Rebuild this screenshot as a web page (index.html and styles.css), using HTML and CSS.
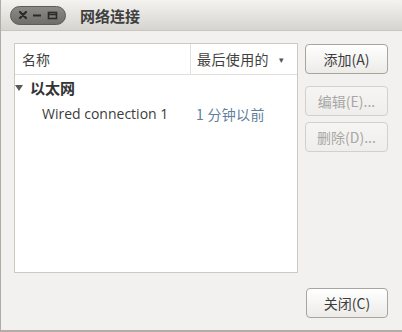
FILE: index.html
```html
<!DOCTYPE html>
<html>
<head>
<meta charset="utf-8">
<link rel="stylesheet" href="styles.css">
</head>
<body>
<div class="window">
  <div class="titlebar">
    <div class="controls">
      <svg width="56" height="19" viewBox="0 0 56 19">
        <defs>
          <linearGradient id="pill" x1="0" y1="0" x2="0" y2="1">
            <stop offset="0" stop-color="#8d8b86"/>
            <stop offset="1" stop-color="#6f6d68"/>
          </linearGradient>
        </defs>
        <rect x="0.5" y="0.5" width="55" height="18" rx="9" fill="url(#pill)" stroke="#5e5c58"/>
        <path d="M10 6 L16 12 M16 6 L10 12" stroke="#2a2a2a" stroke-width="2.2" stroke-linecap="round"/>
        <path d="M23 9.5 H31" stroke="#2a2a2a" stroke-width="2.2"/>
        <rect x="38.5" y="6.5" width="8" height="6" fill="none" stroke="#2a2a2a" stroke-width="1.6"/>
        <path d="M39 8.5 H46" stroke="#2a2a2a" stroke-width="1.4"/>
      </svg>
    </div>
    <div class="title">网络连接</div>
  </div>
  <div class="body">
    <div class="main">
      <div class="tree">
        <div class="header">
          <div class="col col-name">名称</div>
          <div class="col col-last">最后使用的<span class="sort">▾</span></div>
        </div>
        <div class="group">
          <span class="expander"></span>
          <span class="group-name">以太网</span>
        </div>
        <div class="item">
          <span class="item-name">Wired connection 1</span>
          <span class="item-time">1 分钟以前</span>
        </div>
      </div>
      <div class="buttons">
        <button class="btn">添加(A)</button>
        <button class="btn disabled">编辑(E)...</button>
        <button class="btn disabled">删除(D)...</button>
      </div>
    </div>
    <div class="footer">
      <button class="btn close">关闭(C)</button>
    </div>
  </div>
</div>
</body>
</html>
```
FILE: styles.css
```css
* { box-sizing: border-box; }
html, body { margin: 0; padding: 0; }
body {
  width: 402px;
  height: 332px;
  overflow: hidden;
  font-family: "Noto Sans", "Noto Sans CJK SC", sans-serif;
  color: #3c3c3c;
  background: #f2f1ef;
}
.window {
  width: 402px;
  height: 332px;
  display: flex;
  flex-direction: column;
  border-left: 1px solid #b3aca4;
  border-bottom: 2px solid #b3aca4;
  border-top-right-radius: 6px;
  overflow: hidden;
  background: #f2f1ef;
}
.titlebar {
  height: 31px;
  flex: none;
  display: flex;
  align-items: center;
  background: linear-gradient(#f4f3f0, #d6d4cf);
  border-bottom: 1px solid #c9c6c0;
  padding-left: 9px;
}
.controls { display: flex; height: 19px; }
.title {
  margin-left: 14px;
  font-family: "Noto Sans CJK SC", sans-serif;
  font-weight: bold;
  font-size: 15px;
  color: #3f3f3f;
  margin-top: 1px;
}
.body {
  flex: 1;
  display: flex;
  flex-direction: column;
  padding: 12px 14px 0 13px;
}
.main {
  display: flex;
  gap: 7px;
}
.tree {
  width: 284px;
  height: 230px;
  background: #ffffff;
  border: 1px solid #cdc9c3;
  display: flex;
  flex-direction: column;
  white-space: nowrap;
}
.header {
  height: 31px;
  display: flex;
  border-bottom: 1px solid #e2e0dc;
  font-family: "Noto Sans CJK SC", sans-serif;
  font-size: 14px;
  color: #3f3f3f;
}
.col { display: flex; align-items: center; }
.col-name { width: 176px; padding-left: 7px; border-right: 1px solid #e2e0dc; }
.col-last { flex: 1; padding-left: 6px; letter-spacing: 0.4px; }
.sort { font-size: 9px; margin-left: 10px; color: #555; }
.group {
  height: 25px;
  display: flex;
  align-items: center;
}
.expander {
  width: 0; height: 0;
  border-left: 4px solid transparent;
  border-right: 4px solid transparent;
  border-top: 6px solid #5a5a5a;
  margin-left: 0;
  margin-right: 7px;
}
.group-name {
  font-family: "Noto Sans CJK SC", sans-serif;
  font-weight: bold;
  font-size: 15px;
  color: #333;
}
.item {
  height: 27px;
  display: flex;
  align-items: center;
  font-size: 14px;
}
.item-name {
  flex: none;
  width: 181px;
  padding-left: 27px;
  font-family: "Open Sans", "Noto Sans CJK SC", sans-serif;
  color: #3c3c3c;
}
.item-time {
  flex: none;
  font-family: "Noto Sans CJK SC", sans-serif;
  color: #5f7f9b;
  letter-spacing: 0.3px;
}
.buttons {
  display: flex;
  flex-direction: column;
  gap: 6px;
  margin-top: 1px;
}
.btn {
  width: 83px;
  height: 30px;
  border: 1px solid #a8a49e;
  border-radius: 4px;
  background: linear-gradient(#ffffff, #ecebe8);
  font-family: "Noto Sans CJK SC", sans-serif;
  font-size: 14px;
  color: #3c3c3c;
  padding: 0;
  margin: 0;
}
.btn.disabled {
  border-color: #d3d0cb;
  background: linear-gradient(#f6f5f3, #efeeec);
  color: #a8a7a4;
}
.buttons .btn:nth-child(2) { margin-top: 6px; }
.footer {
  display: flex;
  justify-content: flex-end;
  margin-top: 15px;
}
.close { width: 82px; }
```
